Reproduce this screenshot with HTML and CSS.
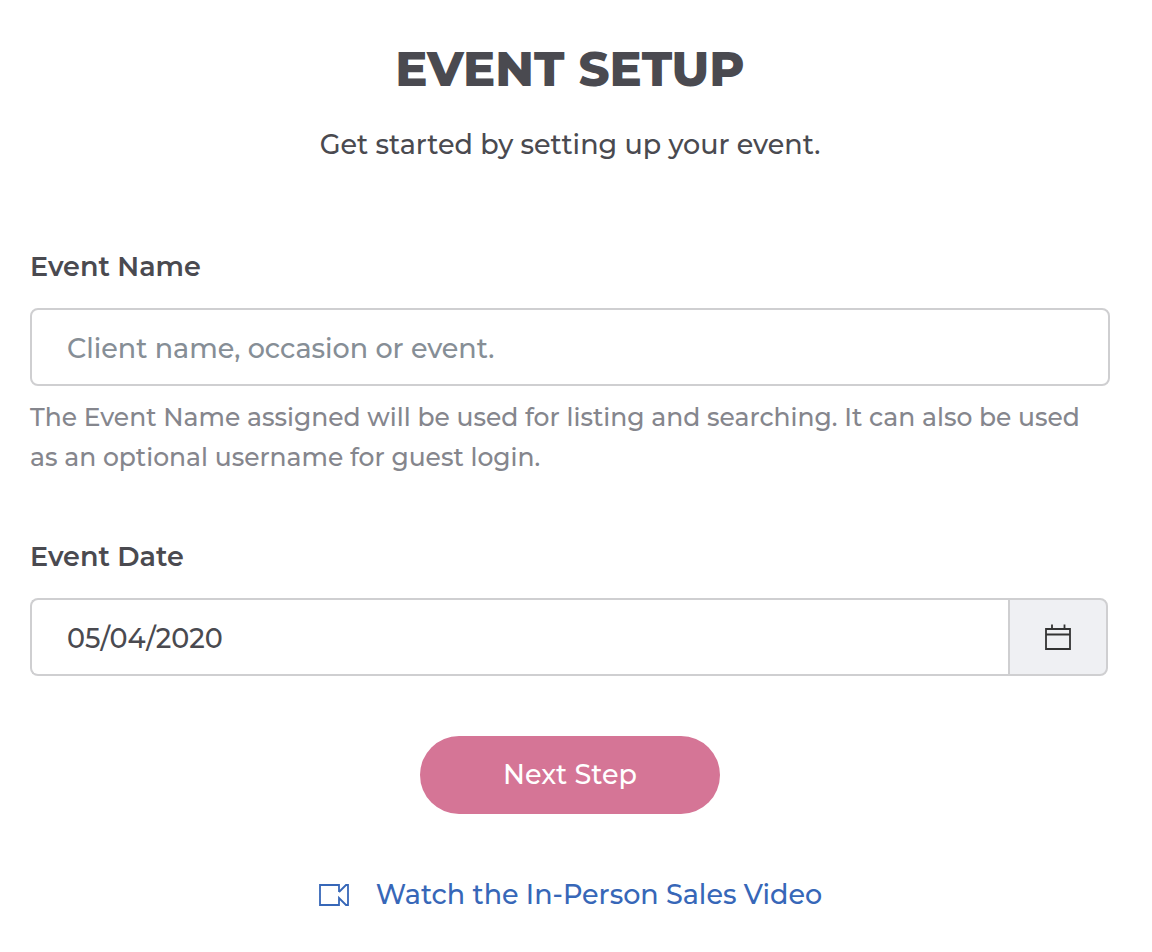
FILE: index.html
```html
<!DOCTYPE html>
<html lang="en">
<head>
<meta charset="utf-8">
<title>Event Setup</title>
<link rel="stylesheet" href="styles.css">
</head>
<body>
<main class="setup">
  <h1 class="title">EVENT SETUP</h1>
  <p class="intro">Get started by setting up your event.</p>
  <form class="form">
    <div class="field">
      <label class="label" for="event-name">Event Name</label>
      <input class="input" id="event-name" type="text" placeholder="Client name, occasion or event.">
      <p class="help">The Event Name assigned will be used for listing and searching. It can also be used as an optional username for guest login.</p>
    </div>
    <div class="field">
      <label class="label" for="event-date">Event Date</label>
      <div class="date-group">
        <input class="input date-input" id="event-date" type="text" value="05/04/2020">
        <button class="date-button" type="button" aria-label="Choose date">
          <svg width="26" height="28" viewBox="0 0 26 28" fill="none" stroke="currentColor" stroke-width="1.8"><path d="M1 6h24v20H1zM1 11.500h24M7 1.500v4.500M19.500 1.500v4.500"/></svg>
        </button>
      </div>
    </div>
    <button class="submit" type="submit">Next Step</button>
  </form>
  <a class="video" href="#">
    <svg width="32" height="24" viewBox="0 0 32 24" fill="none" stroke="currentColor" stroke-width="1.8"><path d="M21 9V2H2v20h19v-7l7 7h2V2h-2l-7 7"/></svg>
    <span>Watch the In-Person Sales Video</span>
  </a>
</main>
</body>
</html>
```
FILE: styles.css
```css
* { box-sizing: border-box; }
body {
  margin: 0;
  background: #fff;
  color: #4a4a50;
  font-family: Montserrat, Lato, "Open Sans", sans-serif;
  font-size: 27px;
  font-weight: 500;
}
.setup {
  display: flex;
  flex-direction: column;
  align-items: center;
  padding: 40px 42px 32px 30px;
}
.title { margin: 0; font-size: 48px; line-height: 58px; font-weight: 800; }
.intro { margin: 27px 0 79px; line-height: 40px; }
.form { display: flex; flex-direction: column; width: 100%; }
.field { display: flex; flex-direction: column; margin-bottom: 60px; }
.label { margin-bottom: 18px; line-height: 46px; font-weight: 600; }
.input {
  width: 100%;
  height: 78px;
  padding: 2px 35px 0;
  border: 2px solid #cfcfd1;
  border-radius: 8px;
  background: #fff;
  color: #4a4a50;
  font: inherit;
}
.input::placeholder { color: #868e96; opacity: 1; }
.help { margin: 11px 0 -3px; color: #85868d; font-size: 25px; line-height: 40px; }
.date-group { display: flex; margin-right: 2px; }
.date-input { flex: 1; border-radius: 8px 0 0 8px; border-right: 0; }
.date-button {
  display: grid;
  place-items: center;
  width: 100px;
  border: 2px solid #cfcfd1;
  border-radius: 0 8px 8px 0;
  background: #eff0f3;
  color: #333;
}
.submit {
  align-self: center;
  width: 300px;
  height: 78px;
  padding: 0 0 2px;
  border: 0;
  border-radius: 39px;
  background: #d57596;
  color: #fff;
  font: inherit;
}
.video { display: flex; align-items: center; gap: 26px; margin-top: 61px; line-height: 40px; color: #3767b8; text-decoration: none; }
```
